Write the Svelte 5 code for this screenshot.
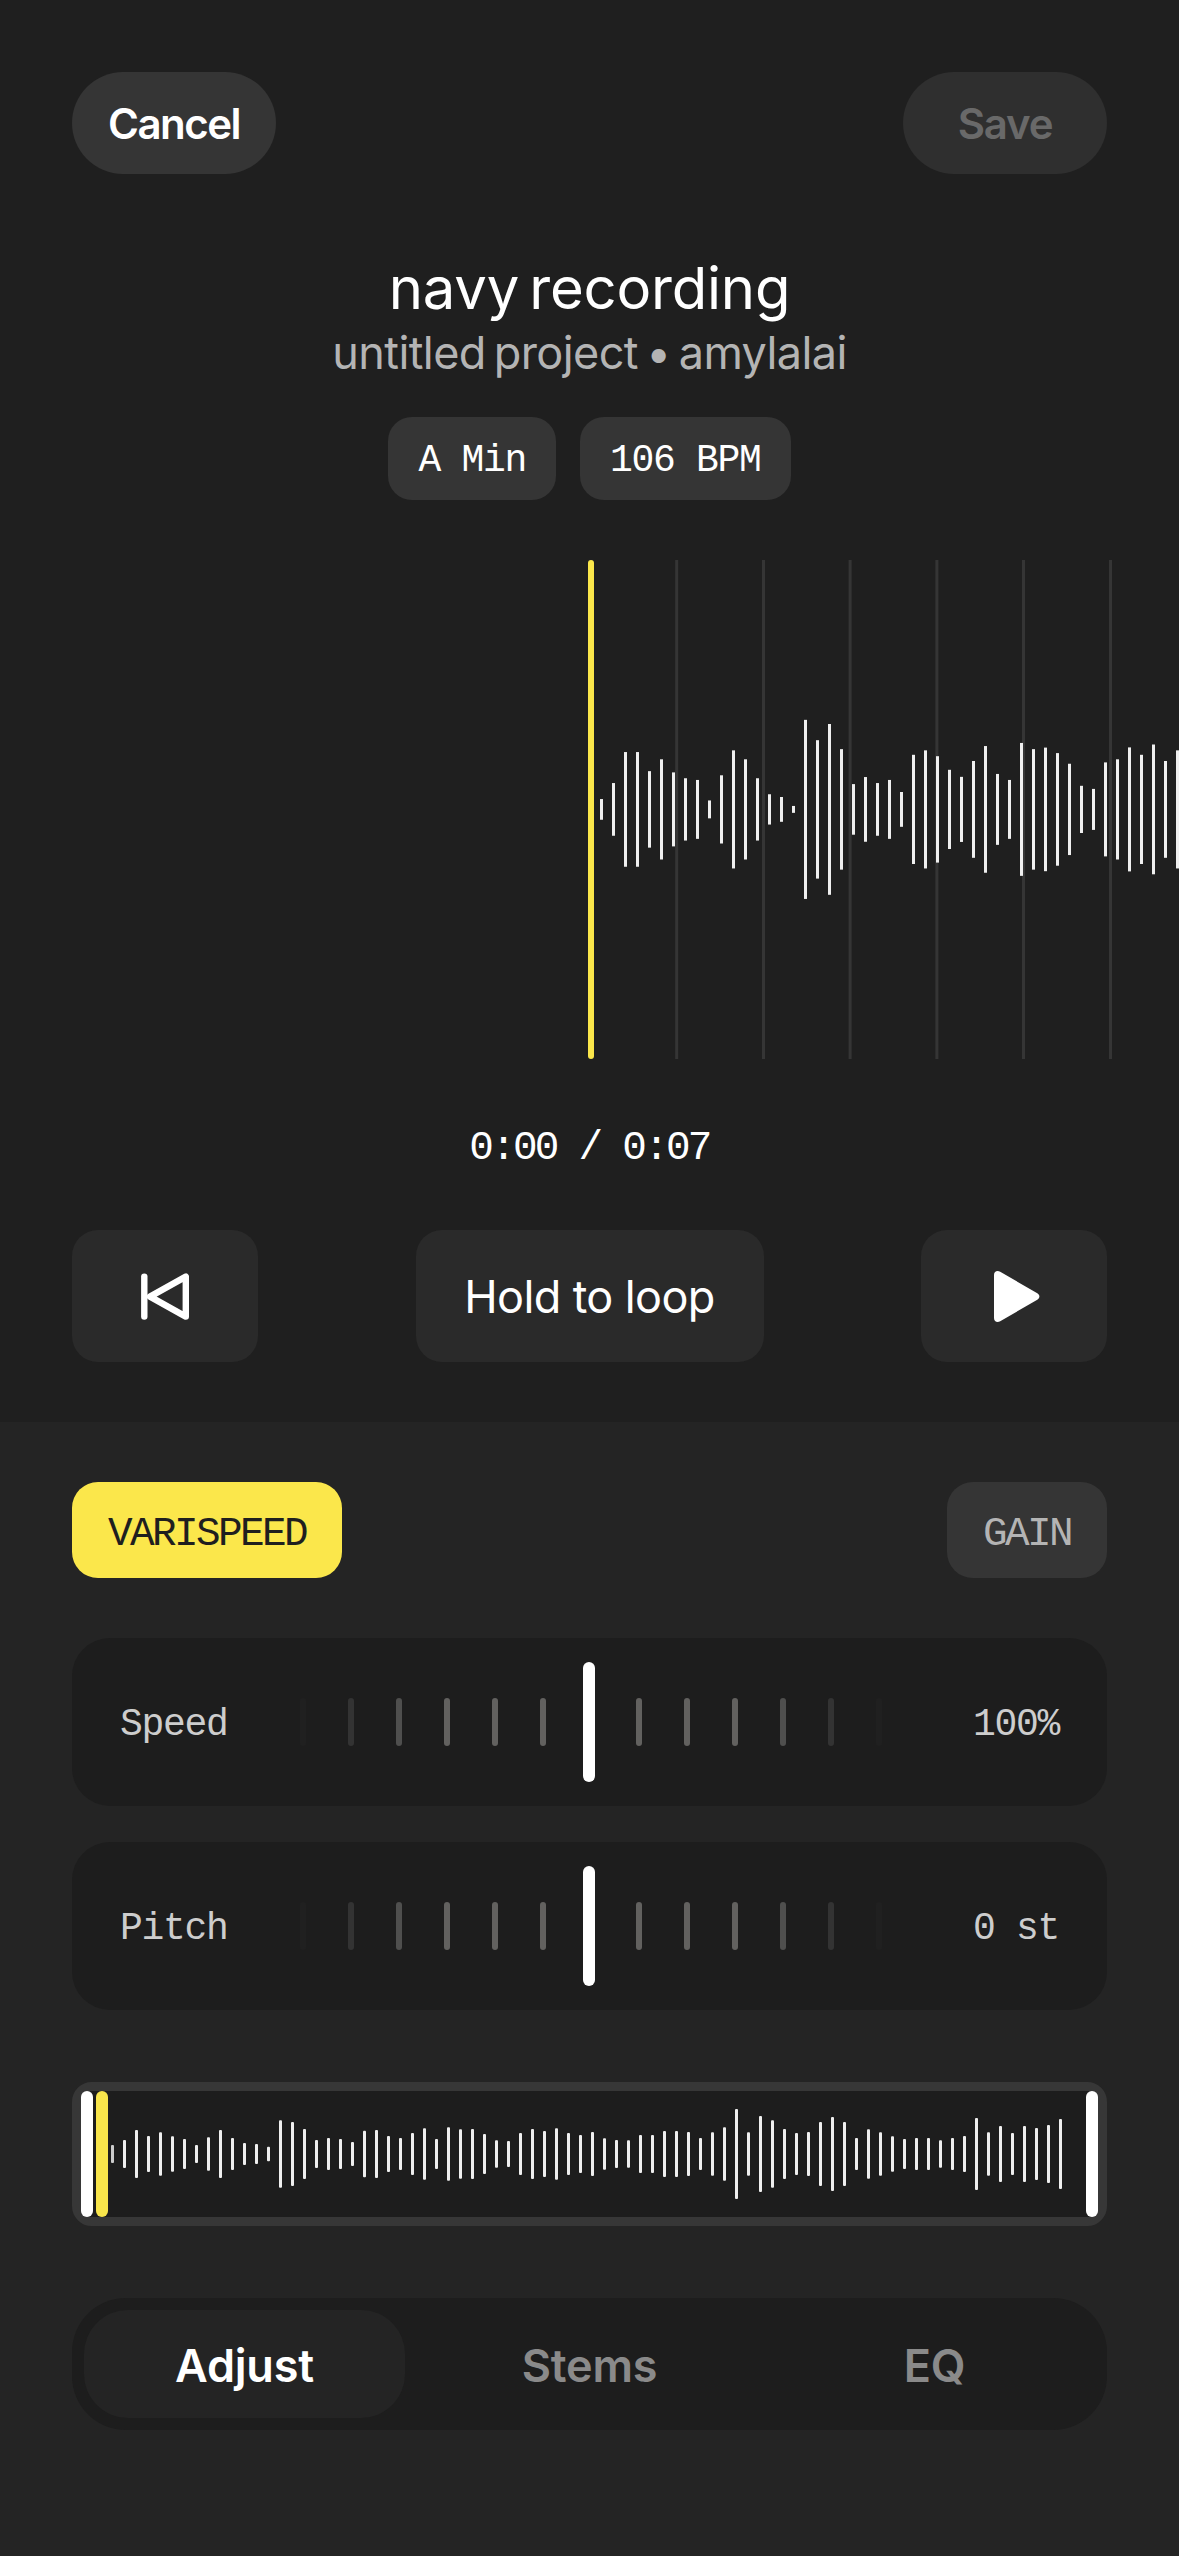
<script lang="ts">
    interface Slider {
        label: string;
        value: string;
    }

    const sliders: Slider[] = [
        {label: "Speed", value: "100%"},
        {label: "Pitch", value: "0 st"},
    ];

    const tabs: string[] = ["Adjust", "Stems", "EQ"];
    let activeTab: string = "Adjust";

    // Ticks fade out towards both ends of the slider
    const ticks: string[] = [
        "#202020", "#333333", "#4f4f4e", "#62615f", "#62615f", "#62615f", "transparent",
        "#62615f", "#62615f", "#62615f", "#4f4f4e", "#333333", "#202020",
    ];

    const gridLines: number[] = [675.2, 762, 848.6, 935.4, 1022, 1109];

    // Bar heights of the zoomed-in waveform
    const peaks: number[] = [
        20.7, 52.7, 114.7, 114.7, 76.5, 100.2, 74, 62.3, 58.9, 17.9, 68.2, 118.1, 100.2,
        62.3, 30.3, 24.8, 6.9, 179.1, 138.4, 170.8, 120.5, 50.6, 64.7, 52.7, 58.9, 34.8,
        109.2, 118.1, 106.4, 79.2, 65.1, 96.8, 126.7, 70.9, 58.9, 132.9, 120.5, 123.6,
        112.6, 91.3, 47.2, 41, 94, 100.2, 124, 109.2, 129.8, 96.8, 118.1,
    ];

    // Bar heights of the full clip
    const overview: number[] = [
        18, 28, 48, 36, 43.6, 35.6, 30, 18, 33.6, 48, 32, 22, 20, 14.4, 67.6, 64, 50, 28,
        32, 30, 24, 46.4, 48, 36, 32, 42, 51.6, 30, 53.6, 49.6, 50, 40, 27.4, 26, 42, 50,
        46, 51.6, 42, 38, 44, 31.6, 28, 27.4, 38, 38, 46, 46, 44, 32, 43.6, 53.6, 90, 43.6,
        76, 67.6, 50, 42, 44, 64, 74, 64, 32, 49.6, 43.6, 35.6, 30, 32, 32, 27.4, 32, 36,
        72, 43.6, 56, 42, 56, 52, 58, 70,
    ];
</script>

<main>
    <section class="top">
        <header>
            <button class="pill">Cancel</button>
            <button class="pill disabled">Save</button>
        </header>

        <h1>navy recording</h1>
        <p class="subtitle">untitled project • amylalai</p>

        <div class="chips">
            <span class="chip">A Min</span>
            <span class="chip">106 BPM</span>
        </div>

        <svg class="wave" viewBox="0 0 1179 499" width="1179" height="499">
            {#each gridLines as x}
                <rect {x} y="0" width="3" height="499" fill="#353535" />
            {/each}
            {#each peaks as peak, i}
                <rect x={600 + i * 12} y={249.4 - peak / 2} width="3" height={peak} fill="#efefef" />
            {/each}
            <rect x="588" y="0" width="6" height="499" rx="3" fill="#fbe74b" />
        </svg>

        <div class="time">0:00 / 0:07</div>

        <div class="transport">
            <button class="square" aria-label="Back to start">
                <svg width="54" height="54" viewBox="0 0 54 54" fill="none" stroke="#fff" stroke-width="6.4" stroke-linecap="round" stroke-linejoin="round">
                    <path d="M6.3 7.6v40" />
                    <path d="M47.8 7.6v40L12 27.6z" />
                </svg>
            </button>
            <button class="loop">Hold to loop</button>
            <button class="square" aria-label="Play">
                <svg width="54" height="54" viewBox="0 0 54 54" fill="#fff">
                    <path d="M7 6C7 2.3 10.2 0.9 13.2 2.7L50.3 24.3C53.1 26 53.1 29 50.3 30.7L13.2 52.3C10.2 54 7 52.7 7 49z" />
                </svg>
            </button>
        </div>
    </section>

    <section class="panel">
        <div class="modes">
            <button class="mode active">VARISPEED</button>
            <button class="mode">GAIN</button>
        </div>

        <div class="sliders">
            {#each sliders as slider}
                <div class="slider">
                    <span>{slider.label}</span>
                    <div class="track">
                        {#each ticks as color}
                            <i style="background: {color}"></i>
                        {/each}
                        <b></b>
                    </div>
                    <span class="value">{slider.value}</span>
                </div>
            {/each}
        </div>

        <div class="trim">
            <i class="handle"></i>
            <i class="handle playhead"></i>
            <svg width="978" height="126" viewBox="0 0 978 126">
                {#each overview as bar, i}
                    <rect x={3 + i * 12} y={63 - bar / 2} width="3" height={bar} rx="1" fill={i ? "#efefef" : "#cccccc"} />
                {/each}
            </svg>
            <i class="handle"></i>
        </div>

        <nav>
            {#each tabs as tab}
                <button class="tab" class:selected={tab === activeTab} on:click={() => activeTab = tab}>{tab}</button>
            {/each}
        </nav>
    </section>
</main>

<style>
    :global(body) {
        background: #242424;
    }

    main {
        display: flex;
        flex-direction: column;
        width: 1179px;
        height: 2556px;
        overflow: hidden;

        background: #242424;
        color: #fff;
        font-family: Inter, "Liberation Sans", sans-serif;
    }

    button {
        border: none;
        margin: 0;
        padding: 0;
        color: inherit;
        font-family: inherit;
        white-space: nowrap;
    }

    .top {
        display: flex;
        flex-direction: column;
        align-items: center;
        height: 1422px;
        background: #1f1f1f;
    }

    header {
        display: flex;
        justify-content: space-between;
        width: 1035px;
        margin-top: 72px;
    }

    .pill {
        width: 204px;
        height: 102px;
        border-radius: 51px;
        background: #353535;
        font-size: 42px;
        font-weight: 600;
        letter-spacing: -1.5px;
    }

    .pill.disabled {
        background: #2f2f2f;
        color: #696969;
        letter-spacing: -1.2px;
    }

    h1 {
        margin: 82px 0 0;
        font-size: 58px;
        font-weight: 400;
        line-height: 64px;
        letter-spacing: -0.2px;
        word-spacing: -6px;
    }

    .subtitle {
        margin: 0;
        color: #b4b4b4;
        font-size: 45px;
        line-height: 65px;
        letter-spacing: -0.6px;
        word-spacing: -4px;
    }

    .chips {
        display: flex;
        gap: 24px;
        margin-top: 32px;
    }

    .chip {
        height: 83px;
        box-sizing: border-box;
        padding: 6px 30px 0;
        border-radius: 24px;
        background: #353535;
        font-family: "Liberation Mono", monospace;
        font-size: 38px;
        line-height: 76px;
        letter-spacing: -1.3px;
    }

    .wave {
        display: block;
        margin-top: 60px;
    }

    .time {
        margin-top: 59px;
        font-family: "Liberation Mono", monospace;
        font-size: 41px;
        line-height: 60px;
        letter-spacing: -2.75px;
    }

    .transport {
        display: flex;
        justify-content: space-between;
        width: 1035px;
        margin-top: 52px;
    }

    .transport button {
        display: flex;
        align-items: center;
        justify-content: center;
        height: 132px;
        border-radius: 26px;
        background: #2a2a2a;
    }

    .transport .square {
        width: 186px;
    }

    .transport .loop {
        width: 348px;
        font-size: 45px;
        letter-spacing: -0.6px;
    }

    .panel {
        padding: 60px 72px 0;
    }

    .modes {
        display: flex;
        justify-content: space-between;
    }

    .mode {
        height: 96px;
        padding: 7px 36px 0;
        border-radius: 26px;
        background: #353535;
        color: #b4b4b4;
        font-family: "Liberation Mono", monospace;
        font-size: 41px;
        letter-spacing: -2.6px;
    }

    .mode.active {
        background: #fbe74b;
        color: #1f1f1f;
    }

    .sliders {
        display: flex;
        flex-direction: column;
        gap: 36px;
        margin-top: 60px;
    }

    .slider {
        display: grid;
        grid-template-columns: 180px 582px 177px;
        align-items: center;
        height: 168px;
        padding: 0 48px;
        border-radius: 38px;
        background: #1d1d1d;
    }

    .slider span {
        padding-top: 5px;
        color: #cdcdcd;
        font-family: "Liberation Mono", monospace;
        font-size: 38px;
        letter-spacing: -1.3px;
    }

    .slider .value {
        text-align: right;
    }

    .track {
        position: relative;
        display: flex;
        justify-content: space-between;
    }

    .track i {
        width: 6px;
        height: 48px;
        border-radius: 3px;
    }

    /* Knob sits over the ticks */
    .track b {
        position: absolute;
        left: 283px;
        top: -36px;
        width: 12px;
        height: 120px;
        border-radius: 6px;
        background: #fff;
    }

    .trim {
        display: flex;
        box-sizing: border-box;
        height: 144px;
        margin-top: 72px;
        border: 9px solid #373737;
        border-radius: 20px;
        background: #1d1d1d;
    }

    .handle {
        flex: none;
        width: 12px;
        height: 126px;
        border-radius: 6px;
        background: #fff;
    }

    .handle.playhead {
        margin-left: 3px;
        background: #f8e54b;
    }

    nav {
        display: flex;
        gap: 24px;
        height: 108px;
        margin-top: 72px;
        padding: 12px;
        border-radius: 54px;
        background: #1d1d1d;
    }

    .tab {
        flex: 1;
        padding-top: 2px;
        border-radius: 44px;
        background: none;
        color: #8a8a8a;
        font-size: 45px;
        font-weight: 600;
        letter-spacing: -0.2px;
    }

    .tab.selected {
        background: #242424;
        color: #fff;
    }
</style>
